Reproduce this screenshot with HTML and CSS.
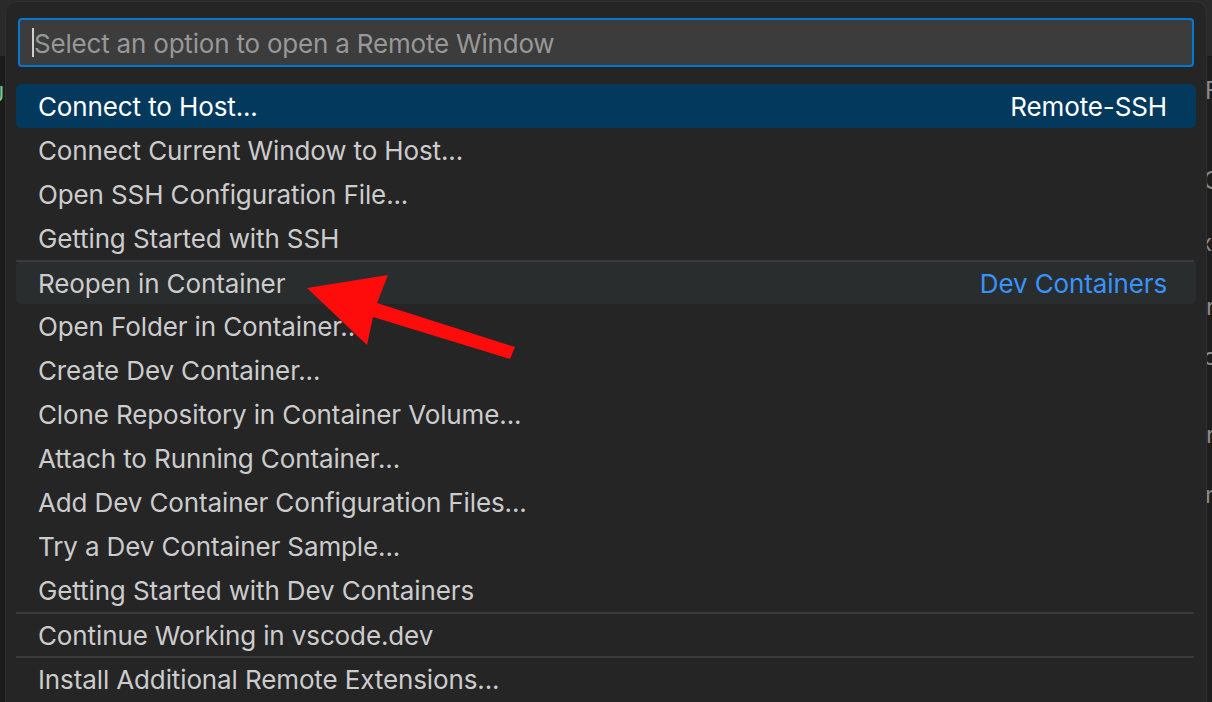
FILE: index.html
```html
<!DOCTYPE html>
<html lang="en">
<head>
<meta charset="utf-8">
<title>Remote Window</title>
<link rel="stylesheet" href="styles.css">
</head>
<body>
<div class="workbench">
  <div class="titlebar"></div>
  <div class="editor">
    <div class="left-gutter"><span class="git-mark">U</span></div>
    <div class="editor-space"></div>
    <div class="right-peek">
      <span class="peek p1">F</span>
      <span class="peek p2">C</span>
      <span class="peek p3">x</span>
      <span class="peek p4">r</span>
      <span class="peek p5">c</span>
      <span class="peek p6">r</span>
      <span class="peek p7">m</span>
    </div>
  </div>
</div>

<div class="quick-input">
  <div class="input-box">
    <span class="caret"></span>
    <span class="placeholder">Select an option to open a Remote Window</span>
  </div>
  <div class="list">
    <div class="row selected"><span class="label">Connect to Host...</span><span class="desc">Remote-SSH</span></div>
    <div class="row"><span class="label">Connect Current Window to Host...</span></div>
    <div class="row"><span class="label">Open SSH Configuration File...</span></div>
    <div class="row"><span class="label">Getting Started with SSH</span></div>
    <div class="row sep hover"><span class="label">Reopen in Container</span><span class="desc group">Dev Containers</span></div>
    <div class="row"><span class="label">Open Folder in Container...</span></div>
    <div class="row"><span class="label">Create Dev Container...</span></div>
    <div class="row"><span class="label">Clone Repository in Container Volume...</span></div>
    <div class="row"><span class="label">Attach to Running Container...</span></div>
    <div class="row"><span class="label">Add Dev Container Configuration Files...</span></div>
    <div class="row"><span class="label">Try a Dev Container Sample...</span></div>
    <div class="row"><span class="label">Getting Started with Dev Containers</span></div>
    <div class="row sep"><span class="label">Continue Working in vscode.dev</span></div>
    <div class="row sep"><span class="label">Install Additional Remote Extensions...</span></div>
  </div>
</div>

<svg class="arrow" width="1212" height="702" viewBox="0 0 1212 702" aria-hidden="true">
  <polygon fill="#fe0b0b" points="307,288 388,275 377,303 515,347 510,359 373,317 367,345"/>
</svg>
</body>
</html>
```

FILE: styles.css
```css
* { box-sizing: border-box; }

html, body {
  margin: 0;
  padding: 0;
  width: 1212px;
  height: 702px;
  overflow: hidden;
  background: #1e1e1e;
  font-family: Inter, "Open Sans", "Liberation Sans", sans-serif;
}

.workbench {
  display: flex;
  flex-direction: column;
  width: 1212px;
  height: 702px;
}

.titlebar {
  height: 57px;
  background: #2a2a2a;
  border-bottom: 1px solid #1a1a1a;
}

.editor {
  flex: 1;
  display: flex;
  background: #1b1b1b;
}

.left-gutter {
  width: 6px;
  overflow: hidden;
}

.git-mark {
  display: block;
  margin-top: 26px;
  margin-left: -12px;
  color: #73c991;
  font-size: 22px;
  line-height: 22px;
}

.editor-space { flex: 1; }

.right-peek {
  width: 6px;
  overflow: hidden;
  display: flex;
  flex-direction: column;
  color: #8a8a8a;
  font-size: 24px;
  line-height: 24px;
  background: #1e1e1e;
  border-left: 1px solid #2b2b2b;
}

.peek { display: block; margin-left: -2px; }
.p1 { margin-top: 22px; }
.p2 { margin-top: 66px; margin-left: -4px; }
.p3 { margin-top: 38px; margin-left: -8px; }
.p4 { margin-top: 40px; margin-left: -1px; }
.p5 { margin-top: 26px; margin-left: -4px; }
.p6 { margin-top: 54px; margin-left: -1px; }
.p7 { margin-top: 36px; margin-left: -2px; }

.quick-input {
  position: absolute;
  left: 6px;
  top: 2px;
  width: 1200px;
  height: 730px;
  background: #252526;
  border-radius: 10px;
  padding: 16px 10px 0 10px;
  box-shadow: 0 0 0 1px #2f2f2f;
}

.input-box {
  margin: 0 2px;
  height: 49px;
  background: #3c3c3c;
  border: 2px solid #0078d4;
  border-radius: 4px;
  display: flex;
  align-items: center;
  padding-left: 12px;
}

.caret {
  width: 2px;
  height: 29px;
  background: #cfcfcf;
}

.placeholder {
  color: #989898;
  font-size: 26px;
  letter-spacing: -0.2px;
  margin-top: 2px;
}

.list {
  margin-top: 17px;
  display: flex;
  flex-direction: column;
}

.row {
  position: relative;
  height: 44px;
  display: flex;
  align-items: center;
  justify-content: space-between;
  padding: 0 29px 0 22px;
  border-radius: 6px;
  color: #cccccc;
  font-size: 26px;
  letter-spacing: -0.12px;
}

.row .label, .row .desc { margin-top: 1px; }

.row.selected {
  background: #04395e;
  color: #ffffff;
}

.row.hover {
  background: #2a2d2e;
}

.row.sep::before {
  content: "";
  position: absolute;
  left: 0;
  right: 2px;
  top: 0;
  height: 2px;
  background: #3a3a3c;
}

.row.sep .label,
.row.sep .desc { margin-top: 3px; }

.desc { color: #ffffff; }
.desc.group { color: #3794ff; }

.arrow {
  position: absolute;
  left: 0;
  top: 0;
  pointer-events: none;
}
```
